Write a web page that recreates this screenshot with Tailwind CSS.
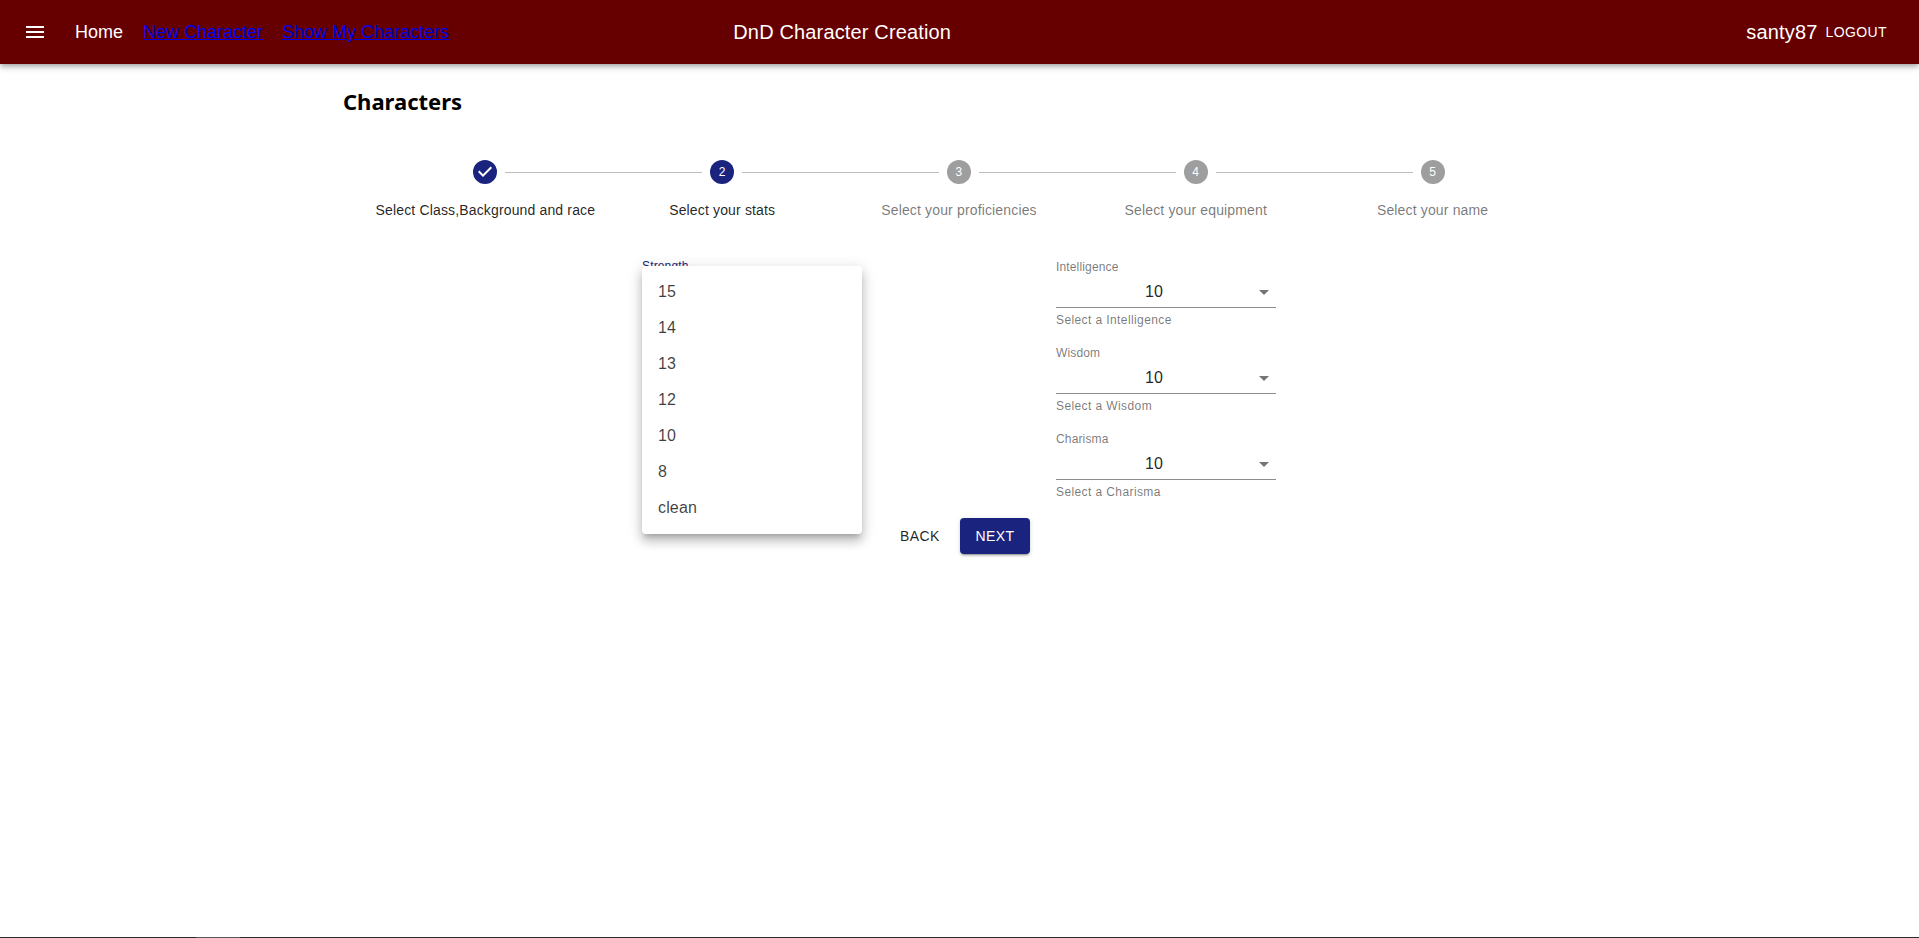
<!DOCTYPE html>
<html>
<head>
<meta charset="utf-8">
<script src="https://cdn.jsdelivr.net/npm/@tailwindcss/browser@4"></script>
</head>
<body class="bg-white font-['Liberation_Sans',Arial,sans-serif] h-[938px] overflow-hidden relative">
<header class="h-16 bg-[#660000] text-white flex items-center pl-[23px] pr-6 shadow-[0_2px_4px_-1px_rgba(0,0,0,0.2),0_4px_5px_0_rgba(0,0,0,0.14),0_1px_10px_0_rgba(0,0,0,0.12)] relative">
  <svg class="w-6 h-6 fill-white mr-[28px]" viewBox="0 0 24 24"><path d="M3 18h18v-2H3v2zm0-5h18v-2H3v2zm0-7v2h18V6H3z"/></svg>
  <span class="text-[18px] w-[68px]">Home</span>
  <a class="text-[18px] text-[#0000ee] underline w-[139px]" href="#">New Character</a>
  <a class="text-[18px] text-[#0000ee] underline" href="#">Show My Characters</a>
  <div class="flex-1 text-center text-[20px] tracking-[0.15px] pr-[511px]">DnD Character Creation</div>
  <span class="text-[20px] tracking-[0.15px] mr-2">santy87</span>
  <span class="text-sm tracking-[0.4px] uppercase mr-2">Logout</span>
</header>
<main class="w-[1232px] ml-[343px]">
  <h1 class="font-['Noto_Sans',sans-serif] font-bold text-[22px] mt-[21px] h-[33px] leading-[33px] text-black">Characters</h1>
  <div class="grid grid-cols-5 px-6 mt-[42px] text-sm tracking-[0.15px]">
    <div class="flex flex-col items-center relative">
      <svg class="w-6 h-6 fill-[#1a237e]" viewBox="0 0 24 24"><path d="M12 0a12 12 0 1 0 0 24 12 12 0 0 0 0-24zm-2 17l-5-5 1.4-1.4 3.6 3.6 7.6-7.6L19 8l-9 9z"/></svg>
      <div class="mt-4 leading-[20px] h-5 text-black/87">Select Class,Background and race</div>
    </div>
    <div class="flex flex-col items-center relative">
      <div class="absolute h-px bg-[#bdbdbd] top-[12px] left-[calc(-50%+20px)] right-[calc(50%+20px)]"></div>
      <div class="w-6 h-6 rounded-full bg-[#1a237e] text-white text-xs flex items-center justify-center">2</div>
      <div class="mt-4 leading-[20px] h-5 text-black/87">Select your stats</div>
    </div>
    <div class="flex flex-col items-center relative">
      <div class="absolute h-px bg-[#bdbdbd] top-[12px] left-[calc(-50%+20px)] right-[calc(50%+20px)]"></div>
      <div class="w-6 h-6 rounded-full bg-[#9e9e9e] text-white text-xs flex items-center justify-center">3</div>
      <div class="mt-4 leading-[20px] h-5 text-black/54">Select your proficiencies</div>
    </div>
    <div class="flex flex-col items-center relative">
      <div class="absolute h-px bg-[#bdbdbd] top-[12px] left-[calc(-50%+20px)] right-[calc(50%+20px)]"></div>
      <div class="w-6 h-6 rounded-full bg-[#9e9e9e] text-white text-xs flex items-center justify-center">4</div>
      <div class="mt-4 leading-[20px] h-5 text-black/54">Select your equipment</div>
    </div>
    <div class="flex flex-col items-center relative">
      <div class="absolute h-px bg-[#bdbdbd] top-[12px] left-[calc(-50%+20px)] right-[calc(50%+20px)]"></div>
      <div class="w-6 h-6 rounded-full bg-[#9e9e9e] text-white text-xs flex items-center justify-center">5</div>
      <div class="mt-4 leading-[20px] h-5 text-black/54">Select your name</div>
    </div>
  </div>
  <div class="flex mt-[39px] pl-[299px]">
    <div class="w-[414px] relative">
      <div class="text-xs leading-[14px] text-[#1a237e] tracking-[0.15px]">Strength</div>
      <div class="absolute left-0 top-[7px] w-[220px] h-[268px] bg-white rounded shadow-[0_5px_5px_-3px_rgba(0,0,0,0.2),0_8px_10px_1px_rgba(0,0,0,0.14),0_3px_14px_2px_rgba(0,0,0,0.12)] py-2 text-base tracking-[0.15px] text-black/75 z-10">
        <div class="h-9 px-4 flex items-center">15</div>
        <div class="h-9 px-4 flex items-center">14</div>
        <div class="h-9 px-4 flex items-center">13</div>
        <div class="h-9 px-4 flex items-center">12</div>
        <div class="h-9 px-4 flex items-center">10</div>
        <div class="h-9 px-4 flex items-center">8</div>
        <div class="h-9 px-4 flex items-center">clean</div>
      </div>
    </div>
    <div class="w-[220px] flex flex-col gap-[19px] pt-px">
      <div>
        <div class="text-xs leading-[14px] text-black/54 tracking-[0.15px]">Intelligence</div>
        <div class="h-8 mt-[2px] border-b border-[#8c8c8c] relative text-base text-black/87 flex items-center justify-center pr-6">10
          <svg class="absolute right-0 top-[4px] w-6 h-6 fill-black/54" viewBox="0 0 24 24"><path d="M7 10l5 5 5-5z"/></svg></div>
        <div class="text-xs leading-[14px] mt-[5px] text-black/54 tracking-[0.4px]">Select a Intelligence</div>
      </div>
      <div>
        <div class="text-xs leading-[14px] text-black/54 tracking-[0.15px]">Wisdom</div>
        <div class="h-8 mt-[2px] border-b border-[#8c8c8c] relative text-base text-black/87 flex items-center justify-center pr-6">10
          <svg class="absolute right-0 top-[4px] w-6 h-6 fill-black/54" viewBox="0 0 24 24"><path d="M7 10l5 5 5-5z"/></svg></div>
        <div class="text-xs leading-[14px] mt-[5px] text-black/54 tracking-[0.4px]">Select a Wisdom</div>
      </div>
      <div>
        <div class="text-xs leading-[14px] text-black/54 tracking-[0.15px]">Charisma</div>
        <div class="h-8 mt-[2px] border-b border-[#8c8c8c] relative text-base text-black/87 flex items-center justify-center pr-6">10
          <svg class="absolute right-0 top-[4px] w-6 h-6 fill-black/54" viewBox="0 0 24 24"><path d="M7 10l5 5 5-5z"/></svg></div>
        <div class="text-xs leading-[14px] mt-[5px] text-black/54 tracking-[0.4px]">Select a Charisma</div>
      </div>
    </div>
  </div>
  <div class="flex items-center mt-[19px] ml-[541px]">
    <div class="text-sm tracking-[0.4px] uppercase text-black/87 w-[76px] pl-[16px]">Back</div>
    <div class="h-9 w-[70px] rounded bg-[#1a237e] text-white text-sm tracking-[0.4px] uppercase flex items-center justify-center shadow-[0_3px_1px_-2px_rgba(0,0,0,0.2),0_2px_2px_0_rgba(0,0,0,0.14),0_1px_5px_0_rgba(0,0,0,0.12)]">Next</div>
  </div>
</main>
<div class="absolute bottom-0 left-0 right-0 h-px bg-[#2b2b2b]">
  <div class="absolute left-[196px] w-11 h-px bg-[#555]"></div>
</div>
</body>
</html>
